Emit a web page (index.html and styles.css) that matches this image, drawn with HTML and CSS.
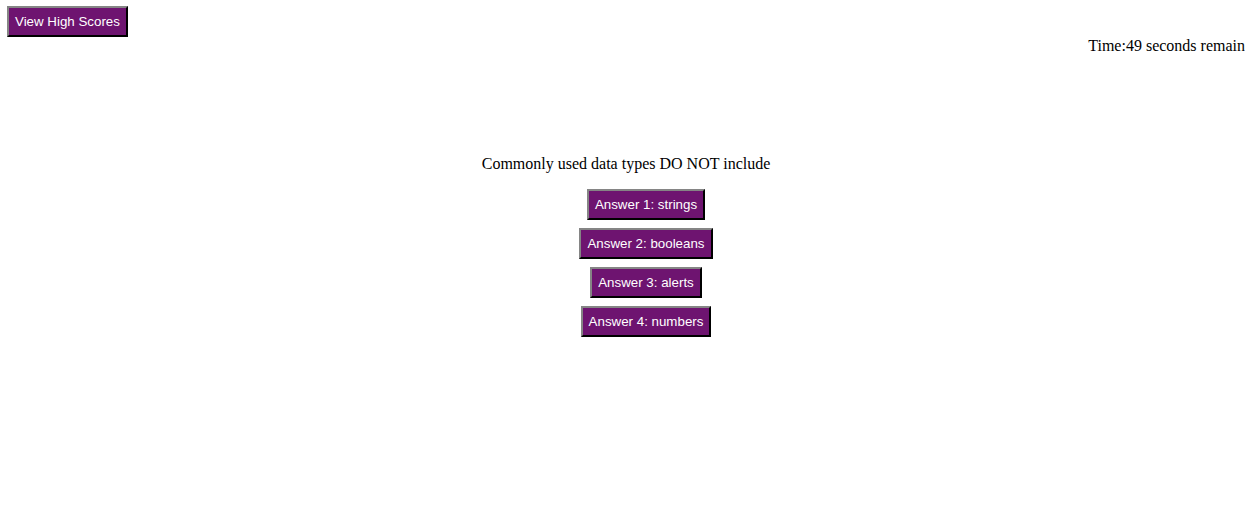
FILE: index.html
```html
<!DOCTYPE html>
<html>
<head>
<meta charset="utf-8">
<link rel="stylesheet" href="styles.css">
</head>
<body>
<header class="top">
  <button class="btn">View High Scores</button>
  <div class="timer">Time:49 seconds remain</div>
</header>
<main class="quiz">
  <p class="question">Commonly used data types DO NOT include</p>
  <ul class="answers">
    <li><button class="btn">Answer 1: strings</button></li>
    <li><button class="btn">Answer 2: booleans</button></li>
    <li><button class="btn">Answer 3: alerts</button></li>
    <li><button class="btn">Answer 4: numbers</button></li>
  </ul>
</main>
</body>
</html>
```
FILE: styles.css
```css
body {
  margin: 6px 3px 0 7px;
  font-family: "Liberation Serif", "Times New Roman", serif;
  font-size: 16px;
  color: #000;
  background: #fff;
}
.top {
  display: flex;
  flex-direction: column;
  align-items: flex-start;
}
.btn {
  font-family: "Liberation Sans", Arial, sans-serif;
  font-size: 13.33px;
  line-height: 15px;
  color: #fff;
  background: #6e1470;
  border: 2px outset #767676;
  border-color: #858585 #222 #222 #858585;
  padding: 6px 6px;
  cursor: pointer;
}
.timer {
  align-self: stretch;
  text-align: right;
  line-height: 18px;
}
.quiz {
  display: flex;
  flex-direction: column;
  align-items: center;
  margin-top: 100px;
}
.question {
  margin: 0 0 16px;
  line-height: 18px;
}
.answers {
  display: flex;
  flex-direction: column;
  align-items: center;
  gap: 8px;
  list-style: none;
  margin: 0;
  padding: 0 0 0 40px;
}
.answers li {
  display: flex;
}
```
